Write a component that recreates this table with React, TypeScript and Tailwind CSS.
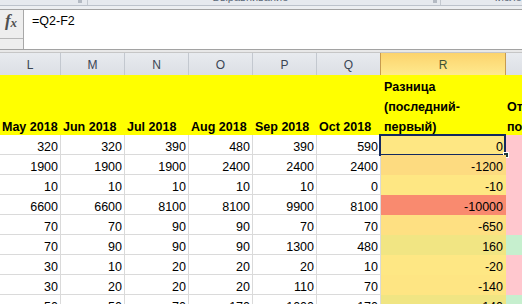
import React from 'react';

type Row = { v: number[]; r: string; s: string };

// values for rows 2..10 (columns L..R)
const rows: Row[] = [
  { v: [320, 320, 390, 480, 390, 590, 0], r: 'bg-[#fee783]', s: 'bg-[#ffc7ce]' },
  { v: [1900, 1900, 1900, 2400, 2400, 2400, -1200], r: 'bg-[#fddb80]', s: 'bg-[#ffc7ce]' },
  { v: [10, 10, 10, 10, 10, 0, -10], r: 'bg-[#fee783]', s: 'bg-[#ffc7ce]' },
  { v: [6600, 6600, 8100, 8100, 9900, 8100, -10000], r: 'bg-[#f98a6f]', s: 'bg-[#ffc7ce]' },
  { v: [70, 70, 90, 90, 70, 70, -650], r: 'bg-[#fee082]', s: 'bg-[#ffc7ce]' },
  { v: [70, 90, 90, 90, 1300, 480, 160], r: 'bg-[#f1e583]', s: 'bg-[#c6efce]' },
  { v: [30, 10, 20, 20, 20, 10, -20], r: 'bg-[#fee784]', s: 'bg-[#ffc7ce]' },
  { v: [30, 20, 20, 20, 110, 70, -140], r: 'bg-[#fee583]', s: 'bg-[#ffc7ce]' },
  { v: [50, 50, 70, 170, 1000, 170, 140], r: 'bg-[#f0e583]', s: 'bg-[#c6efce]' },
];

const months = ['May 2018', 'Jun 2018', 'Jul 2018', 'Aug 2018', 'Sep 2018', 'Oct 2018'];
const letters = ['L', 'M', 'N', 'O', 'P', 'Q'];

function App() {
  return (
    <div className="w-[522px] h-[304px] overflow-hidden bg-white font-['Liberation_Sans',Arial,sans-serif] text-black">
      {/* ribbon bottom edge */}
      <div className="h-[5px] bg-[#e6e9ee] flex overflow-hidden text-[11px] leading-[11px] text-[#5b6878]">
        <div className="w-[80px]" />
        <div className="w-[5px] h-[3px] bg-[#b4bac3]" />
        <div className="w-[5px]" />
        <div className="w-px bg-[#c3c8cf]" />
        <div className="w-[355px] flex justify-center">
          <span className="-mt-[8px] pr-[20px]">Выравнивание</span>
        </div>
        <div className="w-[5px] h-[3px] bg-[#b4bac3]" />
        <div className="w-[3px]" />
        <div className="w-px bg-[#c3c8cf]" />
        <div className="flex-1 pl-[49px]">
          <span className="-mt-[8px] block">Число</span>
        </div>
      </div>
      <div className="h-px bg-[#bcc2cb]" />
      <div className="h-[3px] bg-[#eceef1]" />

      {/* formula bar */}
      <div className="flex h-[40px] border-t border-[#a3a3a3]">
        <div className="w-[24px] bg-[#eeeeee] border-r border-[#a8a8a8] flex flex-col">
          <div className="h-[29px] border-b border-[#b8b8b8] flex items-start justify-center pt-[2px] pr-[1px] font-['Liberation_Serif',serif] italic font-bold text-[#505050]">
            <span className="text-[17px] leading-[18px]">f</span>
            <span className="text-[13px] leading-[18px] pt-[2px]">x</span>
          </div>
          <div className="flex-1" />
        </div>
        <div className="flex-1 pl-[8px] pt-[4px] text-[12.5px] leading-[14px]">=Q2-F2</div>
      </div>
      <div className="h-[4px] bg-[#e8e8e8] border-t border-b border-t-[#a2a2a2] border-b-[#c6c6c6]" />

      {/* sheet */}
      <div className="grid grid-cols-[61px_64px_64px_64px_64px_64px_125px_1fr] text-[12.5px] leading-[14px]">
        {/* column headers */}
        {letters.map((l) => (
          <div
            key={l}
            className="h-[22px] bg-gradient-to-b from-[#e8ebef] to-[#dcdfe5] border-r border-[#c3c8cf] flex items-center justify-center pt-[2px] text-[12px] text-[#3a4553]"
          >
            {l}
          </div>
        ))}
        <div className="h-[22px] bg-gradient-to-b from-[#fcd36c] to-[#feea8e] border-r border-[#c79b4f] shadow-[-1px_0_0_#c79b4f] flex items-center justify-center pt-[2px] text-[12px] text-[#3e5034]">
          R
        </div>
        <div className="h-[22px] bg-gradient-to-b from-[#e8ebef] to-[#dcdfe5]" />

        {/* row 1: yellow titles */}
        {months.map((m) => (
          <div key={m} className="h-[60px] bg-[#ffff00] flex flex-col justify-end pl-[2px] font-bold overflow-hidden whitespace-nowrap">
            <span className="leading-[20px] -mb-[1.5px]">{m}</span>
          </div>
        ))}
        <div className="h-[60px] bg-[#ffff00] flex flex-col justify-end pl-[3px] font-bold whitespace-nowrap">
          <span className="leading-[20px] -mb-[1.5px]">
            Разница
            <br />
            (последний-
            <br />
            первый)
          </span>
        </div>
        <div className="h-[60px] bg-[#ffff00] flex flex-col justify-end pl-[1px] font-bold whitespace-nowrap overflow-hidden">
          <span className="leading-[20px] -mb-[1.5px]">
            Отношение
            <br />
            последний/первый
          </span>
        </div>

        {/* data rows */}
        {rows.map((row, i) => (
          <React.Fragment key={i}>
            {row.v.slice(0, 6).map((n, j) => (
              <div key={j} className="h-[20px] border-r border-b border-[#dadada] flex items-end justify-end pr-[2px]">
                {n}
              </div>
            ))}
            <div className={`relative h-[20px] flex items-end justify-end pr-[3px] pb-px ${row.r}`}>
              {row.v[6]}
              {i === 0 && (
                <>
                  <div className="absolute left-[-2px] top-[-1px] w-[127px] h-[22px] border-2 border-[#14295e]" />
                  <div className="absolute left-[122px] top-[17px] w-[6px] h-[6px] bg-[#1f3b3c] border border-white" />
                </>
              )}
            </div>
            <div className={`h-[20px] ${row.s}`} />
          </React.Fragment>
        ))}
      </div>
    </div>
  );
}

export default App;
